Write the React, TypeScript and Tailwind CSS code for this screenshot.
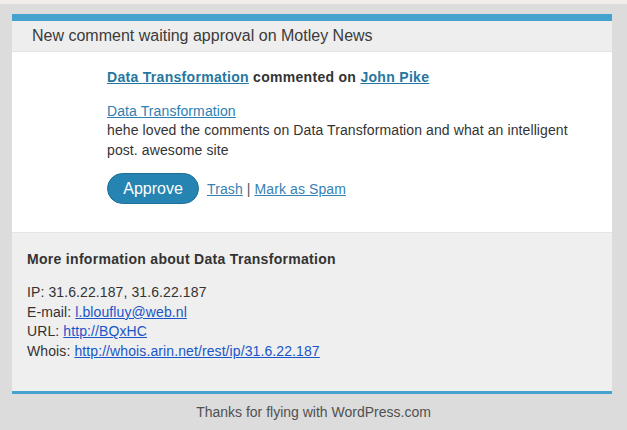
import React from "react";

const infoLines = [
  { label: "IP:", value: "31.6.22.187, 31.6.22.187" },
  { label: "E-mail:", link: "l.bloufluy@web.nl" },
  { label: "URL:", link: "http://BQxHC" },
  { label: "Whois:", link: "http://whois.arin.net/rest/ip/31.6.22.187" },
];

export default function App() {
  return (
    <div
      className="w-[627px] h-[430px] bg-[#dcdcdc] overflow-hidden"
      style={{ fontFamily: '"Liberation Sans", Arial, sans-serif' }}
    >
      <div className="h-[4px] bg-[#f0edeb]" />
      <div className="pt-[10px] px-[12px]">
        <div className="w-[600px] border-t-[7px] border-[#45a2cf]">
          <div className="h-[31px] bg-[#eeeeee] border-b border-[#e2e2e2] pl-[20px] flex items-center text-[16px] text-[#3b3b3b]">
            New comment waiting approval on Motley News
          </div>

          <div className="bg-white pl-[95px] pr-[40px] pt-[15px] pb-[28px] border-b border-[#e6e6e6] text-[14px] leading-[20px] text-[#333333] tracking-[0.1px]">
            <div className="font-bold tracking-[0.3px]">
              <a className="text-[#2577a0] underline">Data Transformation</a>{" "}
              commented on{" "}
              <a className="text-[#2577a0] underline">John Pike</a>
            </div>
            <div className="mt-[14px]">
              <a className="text-[#2c80b1] underline">Data Transformation</a>
            </div>
            <p className="leading-[19.5px]">
              hehe loved the comments on Data Transformation and what an
              intelligent post. awesome site
            </p>
            <div className="mt-[13px] flex items-center gap-[8px]">
              <button className="w-[92px] h-[31px] rounded-full bg-[#2584b2] border border-[#1f6f96] text-white text-[16px] tracking-normal">
                Approve
              </button>
              <span className="text-[#555555]">
                <a className="text-[#3781b3] underline">Trash</a> |{" "}
                <a className="text-[#3781b3] underline">Mark as Spam</a>
              </span>
            </div>
          </div>

          <div className="bg-[#efefef] pl-[15px] pt-[16px] pb-[29px] border-b-[3px] border-[#45a2cf] text-[14px] text-[#333333] tracking-[0.1px]">
            <div className="font-bold leading-[20px] tracking-[0.3px]">
              More information about Data Transformation
            </div>
            <div className="mt-[14px] leading-[19.7px]">
              {infoLines.map((l) => (
                <div key={l.label}>
                  {l.label}{" "}
                  {l.link ? (
                    <a className="text-[#1a55c8] underline">{l.link}</a>
                  ) : (
                    l.value
                  )}
                </div>
              ))}
            </div>
          </div>
        </div>
      </div>
      <div className="pt-[8px] text-center text-[14px] leading-[20px] text-[#505050]">
        Thanks for flying with WordPress.com
      </div>
    </div>
  );
}
